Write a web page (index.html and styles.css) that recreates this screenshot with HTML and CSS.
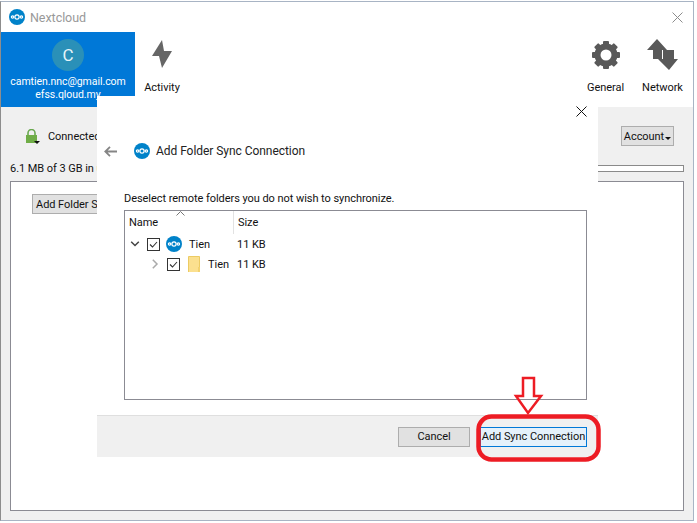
FILE: index.html
```html
<!DOCTYPE html>
<html lang="en">
<head>
  <meta charset="UTF-8" />
  <title>Nextcloud</title>
  <link rel="stylesheet" href="styles.css">
</head>
<body>
  <svg width="0" height="0" class="defs">
    <symbol id="logo" viewBox="0 0 16 16">
      <circle cx="8" cy="8" r="8" fill="#0082c9"/>
      <g fill="none" stroke="#fff" stroke-width="1.2">
        <circle cx="8" cy="8" r="2.1"/>
        <circle cx="3.6" cy="8" r="1.2"/>
        <circle cx="12.4" cy="8" r="1.2"/>
      </g>
    </symbol>
    <symbol id="check" viewBox="0 0 13 13">
      <rect x=".5" y=".5" width="12" height="12" fill="#fff" stroke="#333"/>
      <path d="M3 6.5l2.5 2.5L10 4" fill="none" stroke="#333" stroke-width="1.1"/>
    </symbol>
  </svg>

  <div class="window">
    <div class="titlebar">
      <svg class="title-logo" width="16" height="16"><use href="#logo"/></svg>
      <span class="title-text">Nextcloud</span>
      <svg class="title-close" width="11" height="11" viewBox="0 0 11 11"><path d="M.5.5l10 10M10.5.5l-10 10" stroke="#8c8c8c" fill="none"/></svg>
    </div>

    <div class="nav">
      <div class="account-tab">
        <div class="avatar">C</div>
        <div class="account-line">camtien.nnc@gmail.com</div>
        <div class="account-line">efss.qloud.my</div>
      </div>
      <div class="tool tool-activity">
        <svg width="22" height="30" viewBox="0 0 22 30"><path d="M11 0L1 16h7l3 12 10-17h-8z" fill="#666"/></svg>
        <span>Activity</span>
      </div>
      <div class="nav-spacer"></div>
      <div class="tool">
        <svg width="30" height="30" viewBox="0 0 30 30">
          <circle cx="15" cy="15" r="8.5" fill="none" stroke="#595959" stroke-width="6"/>
          <g fill="#595959">
            <rect x="12" y="1" width="6" height="28" rx="1"/>
            <rect x="12" y="1" width="6" height="28" rx="1" transform="rotate(45 15 15)"/>
            <rect x="12" y="1" width="6" height="28" rx="1" transform="rotate(90 15 15)"/>
            <rect x="12" y="1" width="6" height="28" rx="1" transform="rotate(135 15 15)"/>
          </g>
          <circle cx="15" cy="15" r="5.5" fill="#fff"/>
        </svg>
        <span>General</span>
      </div>
      <div class="tool">
        <svg width="32" height="32" viewBox="0 0 32 32">
          <path d="M10 0l10 11h-5v9H6v-9H0z" fill="#595959"/>
          <path d="M22 31L11 20h5v-9h11v9h4z" fill="#595959"/>
        </svg>
        <span>Network</span>
      </div>
    </div>

    <div class="content">
      <div class="status-row">
        <svg class="lock" width="15" height="15" viewBox="0 0 15 15">
          <path d="M3 6V4a3.500 3.500 0 0 1 7 0v2" fill="none" stroke="#6aa84f" stroke-width="1.6"/>
          <rect x="1" y="6" width="11" height="8" fill="#70ad47"/>
          <path d="M9 12h6l-3 3z" fill="#111"/>
        </svg>
        <span class="status-text">Connected</span>
        <button class="btn account-btn">Account<i class="caret"></i></button>
      </div>
      <div class="usage-row">
        <span>6.1 MB of 3 GB in use</span>
        <div class="usage-bar"></div>
      </div>
      <div class="folders">
        <button class="btn add-folder">Add Folder S</button>
      </div>
    </div>

    <div class="dialog">
      <div class="dialog-body">
        <div class="dialog-close">
          <svg width="11" height="11" viewBox="0 0 11 11"><path d="M.5.5l10 10M10.500.5l-10 10" stroke="#111" fill="none"/></svg>
        </div>
        <div class="dialog-head">
          <svg class="back" width="13" height="11" viewBox="0 0 13 11"><path d="M6 .8L1.300 5.500 6 10.200M1.500 5.500H13" fill="none" stroke="#858585" stroke-width="1.800"/></svg>
          <svg width="16" height="16"><use href="#logo"/></svg>
          <span>Add Folder Sync Connection</span>
        </div>
        <p class="hint">Deselect remote folders you do not wish to synchronize.</p>
        <div class="tree">
          <svg class="sort" width="9" height="5" viewBox="0 0 9 5"><path d="M.5 4.500l4-4 4 4" fill="none" stroke="#777"/></svg>
          <div class="tree-head">
            <span class="col-name">Name</span>
            <span class="col-size">Size</span>
          </div>
          <div class="tree-row">
            <svg class="chev" width="9" height="6" viewBox="0 0 9 6"><path d="M.7.700l3.800 3.800L8.300.7" fill="none" stroke="#444" stroke-width="1.500"/></svg>
            <svg width="13" height="13"><use href="#check"/></svg>
            <svg class="row-icon" width="16" height="16"><use href="#logo"/></svg>
            <span class="row-name">Tien</span>
            <span class="row-size">11 KB</span>
          </div>
          <div class="tree-row tree-row-sub">
            <svg class="chev" width="6" height="10" viewBox="0 0 6 10"><path d="M.8.800L5 5 .8 9.200" fill="none" stroke="#aaa" stroke-width="1.500"/></svg>
            <svg width="13" height="13"><use href="#check"/></svg>
            <svg class="row-icon" width="13" height="16" viewBox="0 0 13 16"><path d="M.5.500h11v16H.5z" fill="#fbe08f" stroke="#eccb63"/><path d="M10 11h2v5h-2z" fill="#f3d26f"/></svg>
            <span class="row-name">Tien</span>
            <span class="row-size">11 KB</span>
          </div>
        </div>
      </div>
      <div class="dialog-foot">
        <button class="btn cancel">Cancel</button>
        <button class="btn primary">Add Sync Connection</button>
      </div>
    </div>
  </div>

  <svg class="markup" width="697" height="523" viewBox="0 0 697 523">
    <g fill="none" stroke="#ed1c24">
      <rect x="478.500" y="416.500" width="120" height="43" rx="13" stroke-width="4.500"/>
      <path d="M523 378h11v18h7l-13 17-12-17h7z" stroke-width="2.500"/>
    </g>
  </svg>
</body>
</html>
```

FILE: styles.css
```css
* {
  box-sizing: border-box;
}

body {
  margin: 0;
  width: 697px;
  height: 523px;
  overflow: hidden;
  background: #fff;
  font-family: "Roboto", sans-serif;
  font-size: 11px;
  letter-spacing: -0.05px;
  color: #111;
}

button {
  font: inherit;
  color: inherit;
  letter-spacing: inherit;
}

.defs {
  position: absolute;
}

.window {
  position: relative;
  display: flex;
  flex-direction: column;
  width: 694px;
  height: 520px;
  margin-top: 1px;
  border: 1px solid #a8b4c4;
  border-left-color: #8d8d8d;
  background: #fff;
}

.titlebar {
  display: flex;
  align-items: center;
  height: 30px;
  padding: 0 10px 0 8px;
}

.title-text {
  margin-left: 5px;
  font-size: 12.5px;
  color: #999;
}

.title-close {
  margin-left: auto;
}

.nav {
  display: flex;
  height: 75px;
  padding-right: 2px;
}

.account-tab {
  width: 134px;
  padding-top: 7px;
  background: #0078d7;
  color: #fff;
  text-align: center;
  font-size: 10.5px;
  line-height: 13px;
}

.avatar {
  width: 32px;
  height: 32px;
  margin: 0 auto 4px;
  border-radius: 50%;
  background: #2a90b8;
  color: #e6f4f8;
  font-size: 17px;
  line-height: 32px;
}

.account-line {
  white-space: nowrap;
}

.tool {
  display: flex;
  flex-direction: column;
  align-items: center;
  width: 57px;
  padding-top: 7px;
}

.tool svg {
  height: 32px;
}

.tool span {
  margin-top: 9px;
  line-height: 16px;
}

.tool-activity {
  width: 54px;
}

.nav-spacer {
  flex: 1;
}

.content {
  flex: 1;
  display: flex;
  flex-direction: column;
  padding: 0 9px 9px 9px;
  background: #f0f0f0;
}

.status-row {
  display: flex;
  align-items: center;
  height: 52px;
  padding: 6px 10px 0 15px;
}

.lock {
  margin-right: 8px;
}

.account-btn {
  margin: 0 0 0 auto;
  width: 53px;
  padding: 0;
}

.caret {
  display: inline-block;
  margin-left: 1px;
  border: 3px solid transparent;
  border-top-color: #111;
  border-bottom: 0;
}

.btn {
  height: 20px;
  border: 1px solid #adadad;
  background: #e1e1e1;
  white-space: nowrap;
}

.usage-row {
  display: flex;
  align-items: center;
  height: 16px;
  margin-top: 1px;
}

.usage-bar {
  flex: 1;
  height: 7px;
  margin-left: 8px;
  border: 1px solid #8a8a8a;
  background: #fff;
}

.folders {
  flex: 1;
  margin-top: 5px;
  padding: 12px 0 0 21px;
  border: 1px solid #8b8b93;
  background: #fff;
}

.add-folder {
  padding: 0 3px;
}

/* dialog sits on top of the settings window */
.dialog {
  position: absolute;
  left: 96px;
  top: 94px;
  display: flex;
  flex-direction: column;
  width: 501px;
  height: 361px;
  background: #fff;
}

.dialog-body {
  flex: 1;
  padding: 0 11px 0 27px;
}

.dialog-close {
  display: flex;
  justify-content: flex-end;
  height: 37px;
  padding: 10px 0 0;
}

.dialog-head {
  display: flex;
  align-items: center;
  gap: 6px;
  height: 16px;
  margin-top: 10px;
  margin-left: -20px;
  font-size: 12px;
  color: #222;
}

.back {
  margin-right: 11px;
}

.hint {
  margin: 32px 0 3px;
  line-height: 16px;
}

.tree {
  position: relative;
  height: 190px;
  border: 1px solid #8b8b93;
}

.sort {
  position: absolute;
  left: 51px;
  top: 0;
}

.tree-head {
  display: flex;
  height: 23px;
  line-height: 24px;
}

.col-name {
  width: 109px;
  padding-left: 4px;
  border-right: 1px solid #e2e2e2;
}

.col-size {
  padding-left: 4px;
}

.tree-row {
  display: flex;
  align-items: center;
  height: 20px;
  padding-left: 5px;
}

.tree-row .chev {
  width: 10px;
  margin-right: 7px;
}

.tree-row-sub {
  padding-left: 25px;
}

.tree-row-sub .row-icon {
  margin-left: 8px;
}

.row-icon {
  margin-left: 6px;
}

.row-name {
  margin-left: 7px;
}

.row-size {
  position: absolute;
  left: 112px;
}

.dialog-foot {
  display: flex;
  align-items: center;
  justify-content: flex-end;
  gap: 10px;
  height: 42px;
  padding: 0 11px 0 0;
  border-top: 1px solid #dfdfdf;
  background: #f0f0f0;
}

.cancel {
  width: 72px;
}

.primary {
  width: 107px;
  padding: 0;
  border-color: #0078d7;
  background: #e5f1fb;
}

.markup {
  position: absolute;
  left: 0;
  top: 0;
}
```
